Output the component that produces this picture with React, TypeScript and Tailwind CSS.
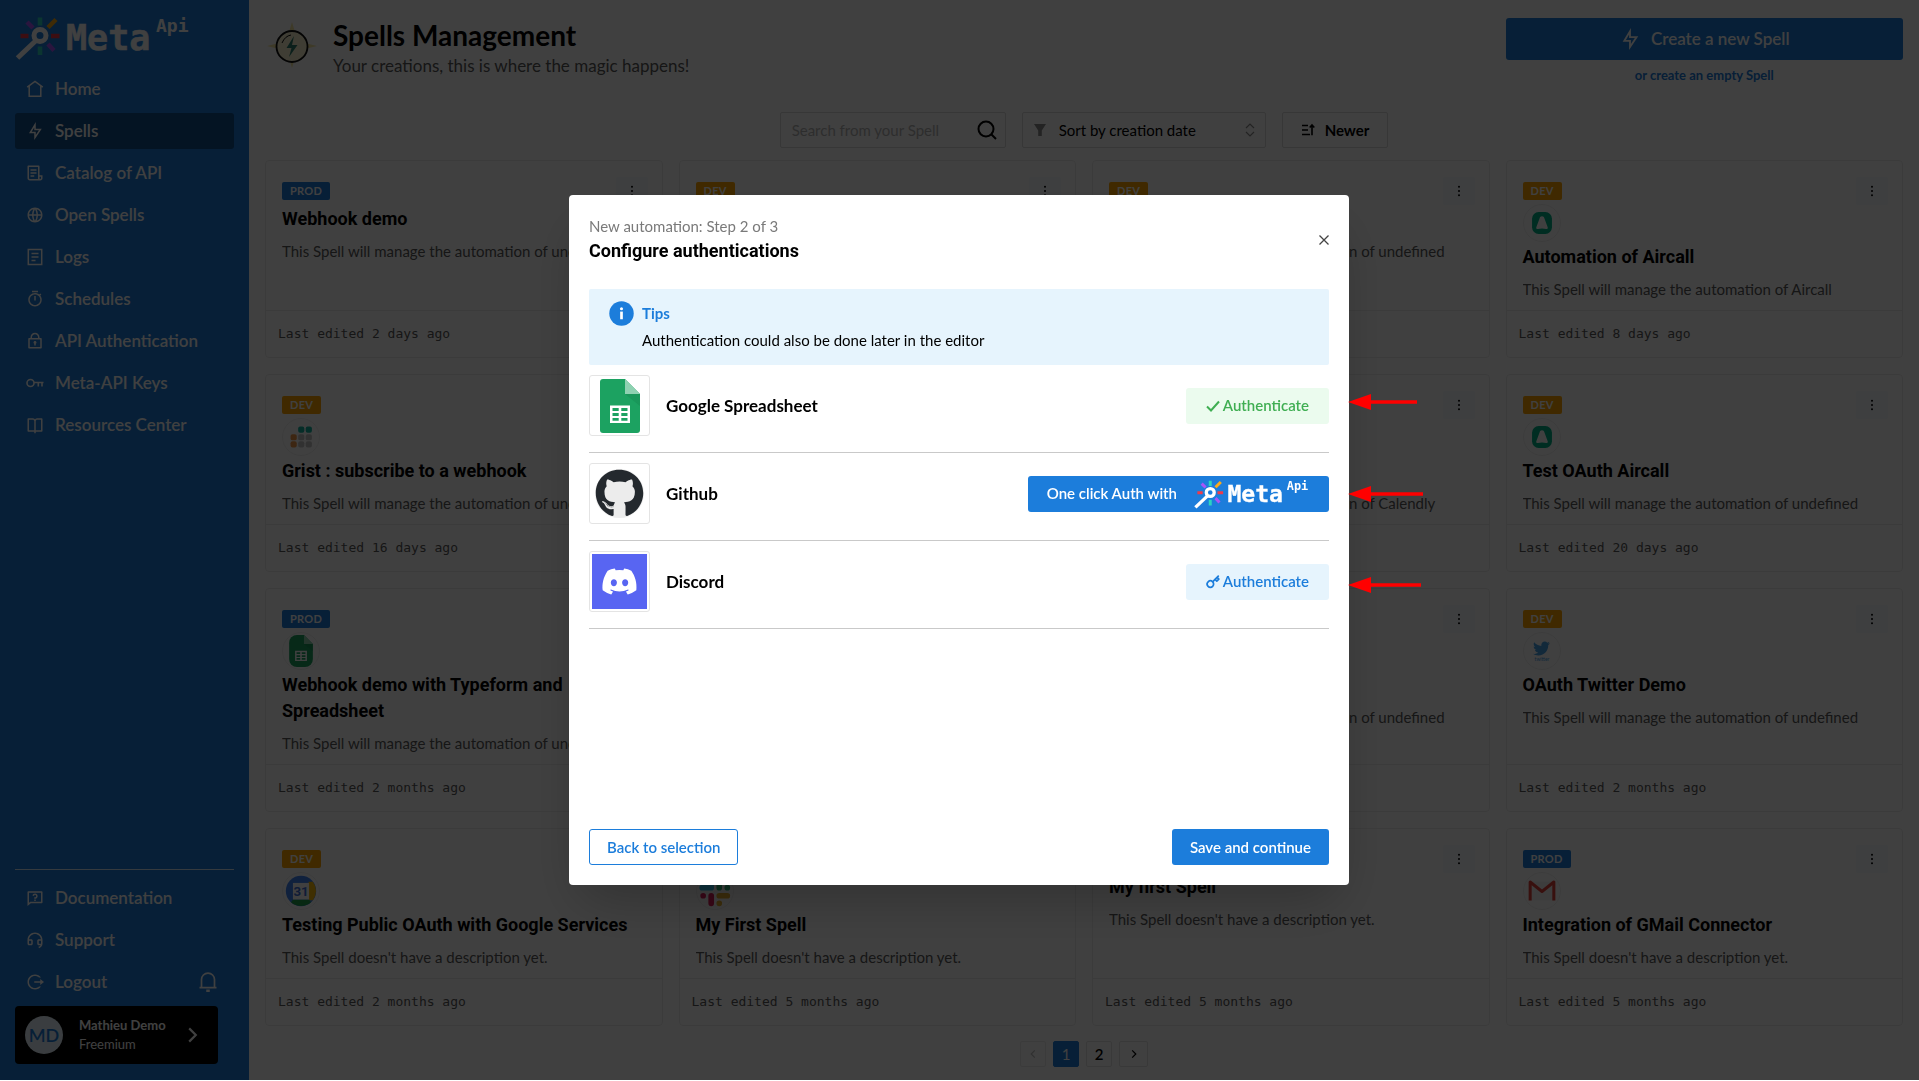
import React from "react";
import {
  RiFlashlightLine,
  RiFileList3Line,
  RiGlobalLine,
  RiTimerLine,
  RiLock2Line,
  RiBookOpenLine,
  RiQuestionnaireLine,
  RiCustomerServiceLine,
  RiLogoutCircleRLine,
} from "react-icons/ri";
import { FaDiscord, FaGithub, FaTwitter } from "react-icons/fa";
import { FiKey } from "react-icons/fi";

/* ---------- drawings ---------- */

function Logo({ className }: { className: string }) {
  return (
    <svg viewBox="15 12 175 50" className={className} role="img" aria-label="Meta Api">
      <g strokeLinecap="butt" strokeWidth="4.5" fill="none">
        <path d="M40 17.500v8M40 46.500v8.500" stroke="#2dd4bf" />
        <path d="M48 27.500l8-8" stroke="#fbab18" />
        <path d="M27 22l6 6M48 44l6 6.500" stroke="#a855f7" />
        <path d="M20.500 36h8M51 36h8.500" stroke="#ef3b4a" />
      </g>
      <circle cx="40" cy="35.500" r="6" fill="none" stroke="#fff" strokeWidth="5" />
      <path d="M35.500 41L17.500 58" stroke="#fff" strokeWidth="5" />
      <text x="66" y="50" fontSize="35" fontWeight="700" fill="#fff" stroke="#fff" strokeWidth=".5" fontFamily="'DejaVu Sans Mono', monospace">
        Meta
      </text>
      <text x="156" y="31.500" fontSize="18" fontWeight="700" fill="#fff" fontFamily="'DejaVu Sans Mono', monospace">
        Api
      </text>
    </svg>
  );
}

function HomeIcon() {
  return (
    <svg viewBox="0 0 18 18" className="size-[18px]" fill="none" stroke="currentColor" strokeWidth="1.5">
      <path d="M1.200 7.200L9 1.500l7.800 5.700M3.200 6v10.300h11.600V6" />
    </svg>
  );
}

function LogsIcon() {
  return (
    <svg viewBox="0 0 18 18" className="size-[18px]" fill="none" stroke="currentColor" strokeWidth="1.5">
      <path d="M2.300 1.500h13.400v15H2.300zM5.500 5.500h7M5.500 9h7M5.500 12.500h4" />
    </svg>
  );
}

function KeyIcon() {
  return (
    <svg viewBox="0 0 18 18" className="size-[18px]" fill="none" stroke="currentColor" strokeWidth="1.6">
      <circle cx="4.500" cy="9" r="3.500" />
      <path d="M8 8.500h9.500M12.300 8.500v4M16 8.500v4" />
    </svg>
  );
}

function BellIcon() {
  return (
    <svg viewBox="0 0 20 22" className="h-[22px] w-5" fill="none" stroke="currentColor" strokeWidth="1.700">
      <path d="M1.500 16.700h17M3.500 16.700V8.600a6.500 6.500 0 0 1 13 0v8.100" />
      <path d="M10 18.500v2.500" strokeWidth="3.500" />
    </svg>
  );
}

function SpellCoin() {
  return (
    <svg viewBox="0 0 54 54" className="size-[54px] shrink-0" aria-hidden="true">
      <path d="M27 4l3 10h-6zM27 50l-3-10h6zM2 28l12-3v6zM52 28l-12 3v-6z" fill="#f6e7a0" />
      <circle cx="27" cy="28.500" r="15.500" fill="#fbf3d0" stroke="#111" strokeWidth="1.800" />
      <path d="M17 25q3-7 9-8" stroke="#111" strokeWidth="1" fill="none" />
      <path d="M29 18l-7.500 12h5l-2.500 9 8.500-12h-5.500z" fill="#2f7d6b" />
    </svg>
  );
}

function SheetIcon({ className }: { className: string }) {
  return (
    <svg viewBox="0 0 40 54" className={className} aria-hidden="true">
      <path d="M3 0h22l15 15v36a3 3 0 0 1-3 3H3a3 3 0 0 1-3-3V3a3 3 0 0 1 3-3z" fill="#1ca261" />
      <path d="M25 0l15 15H25z" fill="#8ed1b1" />
      <path d="M25 15h15v12z" fill="#178f55" opacity=".6" />
      <path
        fillRule="evenodd"
        fill="#fff"
        d="M10 26.500h20V44H10zM12.500 29v3h6.200v-3zM21.300 29v3h6.200v-3zM12.500 34v3h6.200v-3zM21.300 34v3h6.200v-3zM12.500 39v2.700h6.200V39zM21.300 39v2.700h6.200V39z"
      />
    </svg>
  );
}

function AircallIcon() {
  return (
    <svg viewBox="0 0 38 38" className="size-full">
      <rect x="8.500" y="7.500" width="21" height="23" rx="7" fill="#00b388" />
      <path d="M19 12c1.500 0 2 .8 2.500 2l3.500 9.500c.5 1.500-.5 2-1.500 1.800a20 20 0 0 0-9 0c-1 .2-2-.3-1.500-1.800L16.500 14c.5-1.200 1-2 2.500-2z" fill="#fff" />
    </svg>
  );
}

function GristIcon() {
  return (
    <svg viewBox="0 0 38 38" className="size-full">
      <g fill="#16b3a0">
        <rect x="16" y="8" width="6.500" height="6.500" rx="2" />
        <rect x="24" y="8" width="6.500" height="6.500" rx="2" />
      </g>
      <g fill="#f2994a">
        <rect x="8" y="16" width="6.500" height="6.500" rx="2" />
        <rect x="8" y="23.500" width="6.500" height="6.500" rx="2" />
      </g>
      <g fill="#c4c4c4">
        <rect x="16" y="16" width="6.500" height="6.500" rx="2" />
        <rect x="24" y="16" width="6.500" height="6.500" rx="2" />
        <rect x="16" y="23.500" width="6.500" height="6.500" rx="2" />
        <rect x="24" y="23.500" width="6.500" height="6.500" rx="2" />
      </g>
    </svg>
  );
}

function CalendarIcon() {
  return (
    <svg viewBox="0 0 38 38" className="size-full">
      <circle cx="19" cy="19" r="16" fill="#4285f4" />
      <path d="M27 9.200h4.500a16 16 0 0 1 0 19.600H27z" fill="#fbbc04" />
      <path d="M10.500 28h17l2 3a16 16 0 0 1-21 0z" fill="#1e9e4a" />
      <rect x="10.500" y="10.500" width="17" height="17.500" fill="#fff" />
      <text x="19" y="24.500" fontSize="14" textAnchor="middle" fontWeight="700" fontFamily="Roboto, sans-serif" fill="#3f6fd8">
        31
      </text>
    </svg>
  );
}

function SlackIcon() {
  return (
    <svg viewBox="0 0 38 38" className="size-full" strokeWidth="6" strokeLinecap="round" fill="none">
      <path d="M15 7v6M5.500 15.500H15" stroke="#36c5f0" />
      <path d="M23.500 7v8.500M32 15.500v0" stroke="#2eb67d" />
      <path d="M23.500 24H32M23.500 32v0" stroke="#ecb22e" />
      <path d="M15 24v8M6.500 24v0" stroke="#e01e5a" />
    </svg>
  );
}

function TwitterIcon() {
  return (
    <span className="flex flex-col items-center text-[#4aa3e8]">
      <FaTwitter size={17} />
      <svg viewBox="0 0 18 5" className="h-[5px] w-[18px]">
        <text x="9" y="4" fontSize="5" textAnchor="middle" fontFamily="Lato, sans-serif" fill="currentColor">
          twitter
        </text>
      </svg>
    </span>
  );
}

function GmailIcon() {
  return (
    <svg viewBox="0 0 38 38" className="size-full">
      <path d="M6 9h26v20H6z" fill="#f3f3f3" />
      <path d="M6.500 29V9.500L19 19.500l12.500-10V29" fill="none" stroke="#e0413a" strokeWidth="3.200" strokeLinejoin="round" />
    </svg>
  );
}

function DotsIcon() {
  return (
    <svg viewBox="0 0 4 12" className="h-3 w-1" fill="currentColor">
      <circle cx="2" cy="1.800" r="1" />
      <circle cx="2" cy="6" r="1" />
      <circle cx="2" cy="10.200" r="1" />
    </svg>
  );
}

function Chevron({ className, flip }: { className: string; flip?: boolean }) {
  return (
    <svg viewBox="0 0 10 16" className={className} fill="none" stroke="currentColor" strokeWidth="2">
      <path d={flip ? "M8 2L2 8l6 6" : "M2 2l6 6-6 6"} />
    </svg>
  );
}

/* ---------- sidebar ---------- */

const mainNav: { label: string; icon: React.ReactNode; active?: boolean }[] = [
  { label: "Home", icon: <HomeIcon /> },
  { label: "Spells", icon: <RiFlashlightLine size={18} />, active: true },
  { label: "Catalog of API", icon: <RiFileList3Line size={18} /> },
  { label: "Open Spells", icon: <RiGlobalLine size={18} /> },
  { label: "Logs", icon: <LogsIcon /> },
  { label: "Schedules", icon: <RiTimerLine size={18} /> },
  { label: "API Authentication", icon: <RiLock2Line size={18} /> },
  { label: "Meta-API Keys", icon: <KeyIcon /> },
  { label: "Resources Center", icon: <RiBookOpenLine size={18} /> },
];

function NavLink({ label, icon, active }: { label: string; icon: React.ReactNode; active?: boolean }) {
  return (
    <a
      href="#"
      aria-current={active ? "page" : undefined}
      className={
        "flex h-9 items-center gap-[11px] rounded-[3px] px-[11px] text-[17px] font-semibold text-white " +
        (active ? "bg-[#124f8b]" : "")
      }
    >
      {icon}
      {label}
    </a>
  );
}

function Sidebar() {
  return (
    <aside className="flex w-[249px] shrink-0 flex-col bg-[#1c7ddb] px-[15px] pb-4 text-white">
      <Logo className="mt-3 h-[50px] w-[175px]" />
      <nav className="mt-2 flex flex-col gap-1.5 pt-px">
        {mainNav.map((n) => (
          <NavLink key={n.label} {...n} />
        ))}
      </nav>
      <div className="mt-auto flex flex-col gap-1.5 border-t border-white/80 pt-2.5">
        <NavLink label="Documentation" icon={<RiQuestionnaireLine size={18} />} />
        <NavLink label="Support" icon={<RiCustomerServiceLine size={18} />} />
        <div className="flex items-center justify-between pr-4">
          <NavLink label="Logout" icon={<RiLogoutCircleRLine size={18} />} />
          <button aria-label="Notifications">
            <BellIcon />
          </button>
        </div>
      </div>
      <button className="mt-1.5 mr-4 flex h-[58px] items-center rounded bg-black px-2.5 text-left">
        <span className="flex size-[38px] items-center justify-center rounded-full bg-[#e6f4fd] text-lg font-semibold text-[#1c7ddb]">
          MD
        </span>
        <span className="ml-4 flex flex-col text-[13px] leading-[19px]">
          <span className="font-bold">Mathieu Demo</span>
          <span>Freemium</span>
        </span>
        <Chevron className="mr-2.5 ml-auto h-[18px] w-[11px]" />
      </button>
    </aside>
  );
}

/* ---------- spell cards ---------- */

type Spell = { env: "DEV" | "PROD"; icon?: React.ReactNode; title: string; text: string; edited: string };

const auto = (name: string) => `This Spell will manage the automation of ${name}`;
const empty = "This Spell doesn't have a description yet.";

const spells: Spell[] = [
  { env: "PROD", title: "Webhook demo", text: auto("undefined"), edited: "2 days" },
  { env: "DEV", title: "Webhook test", text: auto("undefined"), edited: "5 days" },
  { env: "DEV", title: "Schedule test", text: auto("undefined"), edited: "6 days" },
  { env: "DEV", icon: <AircallIcon />, title: "Automation of Aircall", text: auto("Aircall"), edited: "8 days" },
  { env: "DEV", icon: <GristIcon />, title: "Grist : subscribe to a webhook", text: auto("undefined"), edited: "16 days" },
  { env: "DEV", icon: <GristIcon />, title: "Grist demo", text: auto("undefined"), edited: "17 days" },
  { env: "DEV", icon: <CalendarIcon />, title: "Automation of Calendly", text: auto("Calendly"), edited: "18 days" },
  { env: "DEV", icon: <AircallIcon />, title: "Test OAuth Aircall", text: auto("undefined"), edited: "20 days" },
  {
    env: "PROD",
    icon: <SheetIcon className="h-8 w-6 rounded-[8px]" />,
    title: "Webhook demo with Typeform and Spreadsheet",
    text: auto("undefined"),
    edited: "2 months",
  },
  { env: "DEV", icon: <SlackIcon />, title: "Slack demo", text: auto("undefined"), edited: "2 months" },
  { env: "DEV", icon: <GmailIcon />, title: "GMail demo", text: auto("undefined"), edited: "2 months" },
  { env: "DEV", icon: <TwitterIcon />, title: "OAuth Twitter Demo", text: auto("undefined"), edited: "2 months" },
  { env: "DEV", icon: <CalendarIcon />, title: "Testing Public OAuth with Google Services", text: empty, edited: "2 months" },
  { env: "DEV", icon: <SlackIcon />, title: "My First Spell", text: empty, edited: "5 months" },
  { env: "DEV", title: "My first Spell", text: empty, edited: "5 months" },
  { env: "PROD", icon: <GmailIcon />, title: "Integration of GMail Connector", text: empty, edited: "5 months" },
];

function SpellCard({ spell }: { spell: Spell }) {
  return (
    <article className="flex flex-col rounded-sm border border-[#ececec] bg-white">
      <div className="flex flex-col px-4 pt-[21px] pb-2.5">
        <div className="flex h-[18px] items-center justify-between">
          <span
            className={
              "rounded-xs px-2 text-[11px] leading-[18px] font-bold tracking-wide text-white " +
              (spell.env === "PROD" ? "bg-[#1c7ddb]" : "bg-[#ffa500]")
            }
          >
            {spell.env}
          </span>
          <button
            aria-label={`Options for ${spell.title}`}
            className="-mr-0.5 flex h-7 w-8 items-center justify-center rounded-xs bg-[#f5fafe] text-black"
          >
            <DotsIcon />
          </button>
        </div>
        {spell.icon && (
          <span className="mt-1 -mb-1 flex size-[38px] items-center justify-center overflow-hidden rounded-full border border-[#f0f0f0]">
            {spell.icon}
          </span>
        )}
        <h2 className="mt-1.5 font-[Roboto] text-lg leading-[26px] font-bold text-black">{spell.title}</h2>
        <p className="mt-2 truncate text-[15px] leading-[22px] text-[#595959]">{spell.text}</p>
      </div>
      <footer className="mt-auto border-t border-[#ececec] px-3 py-3 font-['DejaVu_Sans_Mono'] text-[13px] leading-[22px] text-[#595959]">
        Last edited {spell.edited} ago
      </footer>
    </article>
  );
}

function Toolbar() {
  return (
    <div className="mt-[27px] flex justify-center gap-4 text-[15px]">
      <label className="flex h-9 w-[226px] items-center rounded-xs border border-[#d9d9d9] pr-2 pl-[11px]">
        <input
          type="search"
          aria-label="Search from your Spell"
          placeholder="Search from your Spell"
          className="min-w-0 flex-1 bg-transparent outline-none placeholder:text-[#b5b5b5]"
        />
        <svg viewBox="0 0 20 20" className="size-5" fill="none" stroke="#000" strokeWidth="2">
          <circle cx="9" cy="9" r="7.500" />
          <path d="M14.500 14.500L19 19" />
        </svg>
      </label>
      <div className="flex h-9 w-[244px] items-center rounded-xs border border-[#d9d9d9] px-2.5">
        <svg viewBox="0 0 14 14" className="size-3.5" fill="#8c8c8c">
          <path d="M1 1h12L8.800 7.500V13H5.200V7.500z" />
        </svg>
        <select aria-label="Sort order" className="h-full flex-1 appearance-none bg-transparent pl-3 text-black outline-none">
          <option>Sort by creation date</option>
        </select>
        <svg viewBox="0 0 10 14" className="h-3.5 w-2.5" fill="none" stroke="#8c8c8c" strokeWidth="1.200">
          <path d="M1 5l4-4 4 4M1 9l4 4 4-4" />
        </svg>
      </div>
      <button className="flex h-9 items-center gap-2.5 rounded-xs border border-[#d9d9d9] px-[18px] font-bold text-black">
        <svg viewBox="0 0 14 14" className="size-3.5" fill="none" stroke="currentColor" strokeWidth="1.600">
          <path d="M1 2.500h6M1 7h6M1 11.500h8M11 12.300V2M8.700 4.500L11 2l2.300 2.500" />
        </svg>
        Newer
      </button>
    </div>
  );
}

function Pagination() {
  const cell = "flex h-[26px] min-w-[26px] items-center justify-center rounded-xs border text-[15px] ";
  return (
    <nav aria-label="Pages" className="mt-[15px] flex justify-center gap-[7px]">
      <button disabled aria-label="Previous page" className={cell + "border-[#ececec] text-[#bfbfbf]"}>
        <Chevron flip className="h-2.5 w-1.5" />
      </button>
      <button aria-current="page" className={cell + "border-[#1c7ddb] bg-[#1c7ddb] text-white"}>
        1
      </button>
      <button className={cell + "border-[#e3e3e3] font-semibold text-black"}>2</button>
      <button aria-label="Next page" className={cell + "w-[29px] border-[#e3e3e3] text-black"}>
        <Chevron className="h-2.5 w-1.5" />
      </button>
    </nav>
  );
}

/* ---------- dialog ---------- */

const softButton = "flex h-9 items-center gap-[3px] rounded-[3px] px-5 text-[15px] font-semibold ";

function Connector({ name, icon, children }: { name: string; icon: React.ReactNode; children: React.ReactNode }) {
  return (
    <li className="flex items-center border-b border-[#c9c9c9] pt-2.5 pb-4">
      <span className="flex size-[61px] items-center justify-center rounded-[3px] border border-[#e4e4e4]">{icon}</span>
      <span className="ml-4 text-[17px] font-bold text-black">{name}</span>
      <div className="ml-auto">{children}</div>
    </li>
  );
}

function RedArrow({ className, length }: { className: string; length: number }) {
  return (
    <svg
      className={"absolute left-full h-4 overflow-visible " + className}
      width={length}
      viewBox={`0 0 ${length} 16`}
      aria-hidden="true"
    >
      <path d={`M20 8H${length - 2}`} stroke="#f00" strokeWidth="3.500" />
      <path d="M-1 8L22 0v16z" fill="#f00" />
    </svg>
  );
}

function AuthDialog() {
  return (
    <section
      role="dialog"
      aria-modal="true"
      aria-labelledby="dialog-title"
      className="relative flex min-h-[690px] w-full max-w-[780px] flex-col rounded bg-white p-5 shadow-2xl"
    >
      <header className="flex items-center justify-between">
        <div>
          <p className="text-[15px] leading-[22px] text-[#7a7a7a]">New automation: Step 2 of 3</p>
          <h2 id="dialog-title" className="font-[Roboto] text-lg leading-[27px] font-bold text-black">
            Configure authentications
          </h2>
        </div>
        <button aria-label="Close">
          <svg viewBox="0 0 10 10" className="size-2.5" fill="none" stroke="#444" strokeWidth="1.300">
            <path d="M.5.5l9 9M9.500.5l-9 9" />
          </svg>
        </button>
      </header>

      <div className="mt-[25px] flex gap-2 rounded-xs bg-[#e6f4fd] px-5 pt-3 pb-3.5 text-[15px] leading-[22px] text-black">
        <svg viewBox="0 0 26 26" className="size-[25px]" aria-hidden="true">
          <circle cx="13" cy="13" r="12.700" fill="#1c7ddb" />
          <circle cx="13" cy="8" r="1.600" fill="#fff" />
          <path d="M13 11v8" stroke="#fff" strokeWidth="2.800" />
        </svg>
        <div>
          <p className="leading-6 font-bold text-[#1c7ddb]">Tips</p>
          <p className="mt-1">Authentication could also be done later in the editor</p>
        </div>
      </div>

      <ul>
        <Connector name="Google Spreadsheet" icon={<SheetIcon className="h-[54px] w-10" />}>
          <button className={softButton + "bg-[#ebfbee] text-[#3fae52]"}>
            <svg viewBox="0 0 14 14" className="size-3.5" fill="none" stroke="currentColor" strokeWidth="2">
              <path d="M1 7.500l4 4L13 2.500" />
            </svg>
            Authenticate
          </button>
        </Connector>
        <Connector
          name="Github"
          icon={
            <span className="flex rounded-full bg-[#ececec]">
              <FaGithub size={49} className="text-[#24292e]" />
            </span>
          }
        >
          <button className="flex h-9 items-center gap-4 rounded-[3px] bg-[#1c7ddb] px-[19px] text-[15px] font-semibold text-white">
            One click Auth with
            <Logo className="h-[33px] w-[117px]" />
          </button>
        </Connector>
        <Connector
          name="Discord"
          icon={
            <span className="flex size-[55px] items-center justify-center bg-[#5865f2] text-white">
              <FaDiscord size={37} />
            </span>
          }
        >
          <button className={softButton + "bg-[#e6f4fd] text-[#1c7ddb]"}>
            <FiKey size={14} strokeWidth={3} />
            Authenticate
          </button>
        </Connector>
      </ul>

      <footer className="mt-auto flex justify-between text-[15px] font-semibold">
        <button className="h-9 rounded-[3px] border border-[#1c7ddb] px-[17px] text-[#1c7ddb]">Back to selection</button>
        <button className="h-9 rounded-[3px] bg-[#1c7ddb] px-[18px] text-white">Save and continue</button>
      </footer>

      <RedArrow className="top-[199px]" length={70} />
      <RedArrow className="top-[291px]" length={76} />
      <RedArrow className="top-[382px]" length={74} />
    </section>
  );
}

/* ---------- page ---------- */

export default function App() {
  return (
    <div className="bg-white font-[Lato]">
      <div className="flex min-h-[calc(100vh-1px)]">
        <Sidebar />
        <main className="min-w-0 flex-1 px-4 pt-[18px] pb-3">
          <header className="grid grid-cols-4 gap-4">
            <div className="col-span-3 flex items-start gap-3.5">
              <SpellCoin />
              <div>
                <h1 className="text-[28px] leading-[34px] font-bold text-black">Spells Management</h1>
                <p className="text-[17px] leading-7 text-[#595959]">Your creations, this is where the magic happens!</p>
              </div>
            </div>
            <div className="flex flex-col items-center gap-[5px]">
              <button className="flex h-[42px] w-full items-center justify-center gap-2.5 rounded-[3px] bg-[#1c7ddb] text-[17px] font-semibold text-white">
                <RiFlashlightLine size={22} />
                Create a new Spell
              </button>
              <a href="#" className="text-[13px] leading-5 font-bold text-[#1c7ddb]">
                or create an empty Spell
              </a>
            </div>
          </header>
          <Toolbar />
          <div className="mt-3 grid grid-cols-4 gap-4">
            {spells.map((s, i) => (
              <SpellCard key={i} spell={s} />
            ))}
          </div>
          <Pagination />
        </main>
      </div>
      <div className="fixed inset-x-0 top-0 bottom-px flex items-center justify-center bg-black/75 pr-px">
        <AuthDialog />
      </div>
    </div>
  );
}
